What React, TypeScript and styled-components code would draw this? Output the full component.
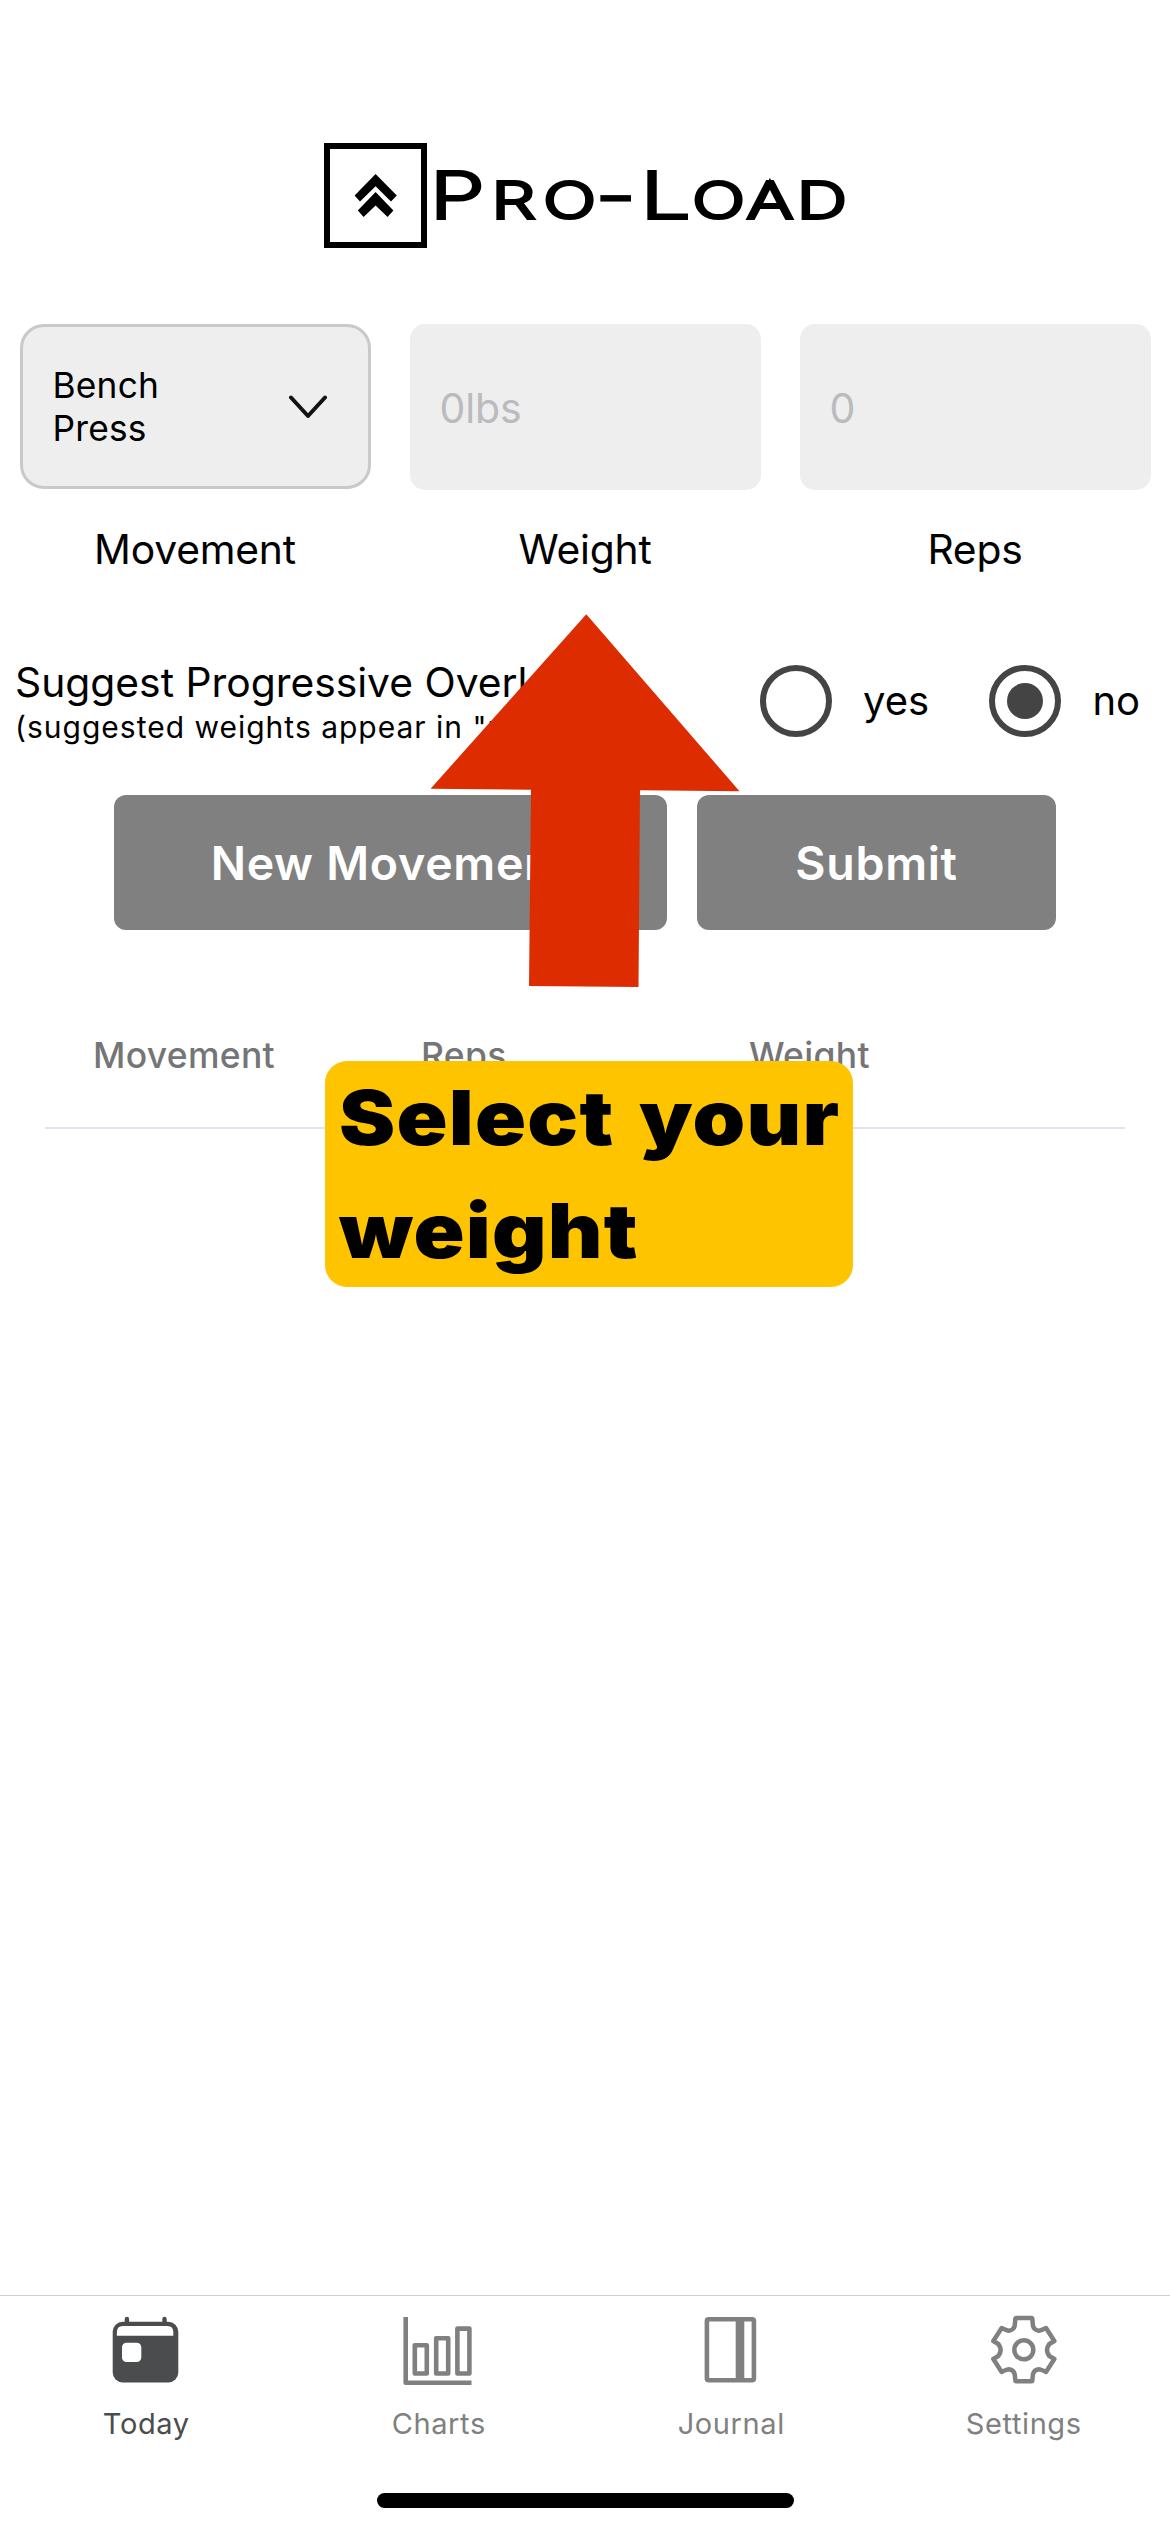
import React from "react";
import styled, { createGlobalStyle } from "styled-components";

const GlobalStyle = createGlobalStyle`
  *, *::before, *::after { box-sizing: border-box; }
  body { margin: 0; background: #fff; }
  button, input { font: inherit; border: 0; margin: 0; }
`;

const Screen = styled.div`
  position: relative;
  width: 1170px;
  height: 2532px;
  display: flex;
  flex-direction: column;
  overflow: hidden;
  background: #fff;
  color: #000;
  font-family: Inter, "Noto Sans", sans-serif;
`;

const Header = styled.header`
  height: 324px;
  padding-top: 143px;
  display: flex;
  justify-content: center;
  align-items: flex-start;
`;

const LogoMark = styled.svg`
  overflow: visible;
`;

const LogoLetters = styled.text`
  font-family: Inter, sans-serif;
  font-weight: 200;
  stroke: #000;
  stroke-width: 3.8px;
  vector-effect: non-scaling-stroke;
`;

const Main = styled.main`
  flex: 1;
  display: flex;
  flex-direction: column;
`;

const Fields = styled.section`
  display: grid;
  grid-template-columns: repeat(3, 1fr);
  height: 250px;
`;

const Field = styled.div`
  display: flex;
  flex-direction: column;
  align-items: center;
`;

const Select = styled.button`
  width: 351px;
  height: 165px;
  margin-bottom: 35px;
  padding: 0 40px 0 30px;
  display: flex;
  align-items: center;
  justify-content: space-between;
  border: 3px solid #c9c9c9;
  border-radius: 24px;
  background: #eee;
  color: #000;
  text-align: left;
`;

const SelectValue = styled.span`
  width: 130px;
  font-size: 35.3px;
  line-height: 43px;
  letter-spacing: 0.2px;
`;

const Input = styled.input`
  width: 351px;
  height: 166px;
  margin-bottom: 34px;
  padding: 1px 30px 0;
  border-radius: 15px;
  background: #eee;
  font-size: 41px;
  letter-spacing: -0.1px;
  &::placeholder { color: #bbbbbe; opacity: 1; }
`;

const Label = styled.label`
  font-size: 40.8px;
  line-height: 50px;
  letter-spacing: -0.2px;
`;

const SuggestRow = styled.section`
  margin-top: 84px;
  height: 86px;
  padding: 0 30px 0 15px;
  display: flex;
  align-items: center;
  justify-content: space-between;
`;

const SuggestText = styled.div`
  display: flex;
  flex-direction: column;
  gap: 5px;
  white-space: nowrap;
`;

const SuggestTitle = styled.span`
  font-size: 40.8px;
  line-height: 46px;
  letter-spacing: 0px;
`;

const SuggestHint = styled.span`
  font-size: 30px;
  line-height: 34px;
  letter-spacing: 1px;
`;

const Radios = styled.div`
  display: flex;
  width: 380px;
  justify-content: space-between;
`;

const Option = styled.label`
  display: flex;
  align-items: center;
  gap: 31px;
  font-size: 40px;
  line-height: 50px;
`;

const Ring = styled.span`
  width: 72px;
  height: 72px;
  display: grid;
  place-items: center;
  border: 6px solid #444;
  border-radius: 50%;
`;

const Dot = styled.span`
  width: 36px;
  height: 36px;
  border-radius: 50%;
  background: #444;
`;

const Actions = styled.section`
  margin-top: 51px;
  display: flex;
  justify-content: center;
  gap: 30px;
`;

const Action = styled.button<{ $width: number }>`
  width: ${(p) => p.$width}px;
  height: 135px;
  padding: 0;
  border-radius: 12px;
  background: #808080;
  color: #fff;
  font-size: 46.5px;
  font-weight: 600;
  letter-spacing: 0.7px;
  white-space: nowrap;
`;

const TableHead = styled.section`
  margin: 103px 45px 0;
  height: 96px;
  padding: 1px 0 0 48px;
  display: grid;
  grid-template-columns: 328px 328px 1fr;
  border-bottom: 2px solid #e3e1ee;
`;

const HeadCell = styled.span`
  font-size: 35.5px;
  line-height: 44px;
  font-weight: 500;
  letter-spacing: 0.3px;
  color: #757578;
`;

const TabBar = styled.nav`
  height: 198px;
  padding-top: 18px;
  display: grid;
  grid-template-columns: repeat(4, 1fr);
  border-top: 1px solid #cfcfd0;
`;

const Tab = styled.a<{ $active?: boolean }>`
  display: flex;
  flex-direction: column;
  align-items: center;
  gap: 20px;
  color: ${(p) => (p.$active ? "#4b4c4e" : "#808080")};
  font-size: 29px;
  line-height: 36px;
  letter-spacing: 0.6px;
  svg { display: block; }
`;

const HomeArea = styled.div`
  height: 39px;
  display: flex;
  justify-content: center;
  align-items: flex-start;
`;

const HomeIndicator = styled.div`
  width: 417px;
  height: 15px;
  border-radius: 8px;
  background: #000;
`;

const Arrow = styled.svg`
  position: absolute;
  left: 430px;
  top: 613px;
`;

const Callout = styled.div`
  position: absolute;
  left: 325px;
  top: 1061px;
  width: 528px;
  height: 226px;
  padding-left: 14px;
  border-radius: 22px;
  background: #ffc400;
`;

const CalloutText = styled.p`
  margin: 0;
  width: max-content;
  font-size: 76px;
  line-height: 113px;
  font-weight: 900;
  letter-spacing: 1.1px;
  word-spacing: 6px;
  white-space: nowrap;
  transform: scaleX(1.11);
  transform-origin: left center;
`;

const Logo = () => (
  <LogoMark width="526" height="105" viewBox="-1 0 526 105" role="img" aria-label="Pro-Load">
    <rect x="4" y="3" width="97" height="99" fill="none" stroke="#000" strokeWidth="6" />
    <path d="M52.6 31 73.8 52.6 68 58.6 52.6 43.2 37 58.6 31.6 52.6Z" />
    <path d="M52.6 49 70.4 67.5 64.6 74 52.6 62.5 40.6 74 34.8 67.5Z" />
    <g transform="scale(1.4 1)">
      <LogoLetters y="75.5" fontSize="63">
        <tspan x="76.5">P</tspan>
        <tspan fontSize="49.5" x="120.5 157.5">RO</tspan>
        <tspan x="195 227">-L</tspan>
        <tspan fontSize="49.5" x="264 303 338.5">OAD</tspan>
      </LogoLetters>
    </g>
  </LogoMark>
);

const ChevronDown = () => (
  <svg width="40" height="24" viewBox="0 0 40 24" fill="none" stroke="#111" strokeWidth="4" strokeLinecap="round" strokeLinejoin="round">
    <path d="M3 2.5 20 21 37 2.5" />
  </svg>
);

const TodayIcon = () => (
  <svg width="72" height="72" viewBox="0 0 72 72" fill="currentColor">
    <rect x="14.7" y="2.7" width="4.4" height="10" rx="2.2" />
    <rect x="52.3" y="2.7" width="4.4" height="10" rx="2.2" />
    <rect x="2.7" y="7.7" width="65.6" height="60.8" rx="10" />
    <path fill="#fff" d="M6.9 21.7V18Q6.9 12 12.9 12H57.3Q63.3 12 63.3 18V21.7Z" />
    <rect fill="#fff" x="12" y="28.7" width="19.3" height="19.3" rx="4.5" />
  </svg>
);

const ChartsIcon = () => (
  <svg width="72" height="72" viewBox="0 0 72 72" fill="none" stroke="currentColor" strokeWidth="4.6" strokeLinejoin="round">
    <path d="M2.7 3V68.7H68.5" />
    <rect x="11.8" y="31.3" width="12" height="28.2" />
    <rect x="33.2" y="24.3" width="12" height="35.2" />
    <rect x="54.4" y="14.6" width="12" height="44.9" />
  </svg>
);

const JournalIcon = () => (
  <svg width="72" height="72" viewBox="0 0 72 72" fill="none" stroke="currentColor">
    <rect x="11.9" y="5.3" width="47" height="61" rx="1.8" strokeWidth="4.6" />
    <path d="M45 5V67" strokeWidth="8.6" />
  </svg>
);

const SettingsIcon = () => (
  <svg width="72" height="72" viewBox="38 42 216 216" fill="none" stroke="currentColor" strokeWidth="13.5" strokeLinejoin="round">
    <path d="M123 54H168Q171 54 171 58L173 78Q176 90 190 92Q196 92 212 84L237 123L222 132Q208 150 222 168L237 177L212 216Q196 208 190 208Q176 210 173 222L171 240Q171 244 168 244H123Q120 244 120 240L118 222Q115 210 101 208Q95 208 79 216L54 177L69 168Q83 150 69 132L54 123L79 84Q95 92 101 92Q115 90 118 78L120 58Q120 54 123 54Z" />
    <circle cx="145.5" cy="149.5" r="28.5" />
  </svg>
);

const tabs = [
  { name: "Today", Icon: TodayIcon },
  { name: "Charts", Icon: ChartsIcon },
  { name: "Journal", Icon: JournalIcon },
  { name: "Settings", Icon: SettingsIcon },
];

export default function App() {
  return (
    <>
      <GlobalStyle />
      <Screen>
        <Header>
          <Logo />
        </Header>
        <Main>
          <Fields>
            <Field>
              <Select>
                <SelectValue>Bench Press</SelectValue>
                <ChevronDown />
              </Select>
              <Label>Movement</Label>
            </Field>
            <Field>
              <Input placeholder="0lbs" />
              <Label>Weight</Label>
            </Field>
            <Field>
              <Input placeholder="0" />
              <Label>Reps</Label>
            </Field>
          </Fields>
          <SuggestRow>
            <SuggestText>
              <SuggestTitle>Suggest Progressive Overload</SuggestTitle>
              <SuggestHint>(suggested weights appear in "reps")</SuggestHint>
            </SuggestText>
            <Radios>
              <Option>
                <Ring />
                yes
              </Option>
              <Option>
                <Ring>
                  <Dot />
                </Ring>
                no
              </Option>
            </Radios>
          </SuggestRow>
          <Actions>
            <Action $width={553}>New Movement</Action>
            <Action $width={359}>Submit</Action>
          </Actions>
          <TableHead>
            <HeadCell>Movement</HeadCell>
            <HeadCell>Reps</HeadCell>
            <HeadCell>Weight</HeadCell>
          </TableHead>
        </Main>
        <TabBar>
          {tabs.map(({ name, Icon }) => (
            <Tab key={name} $active={name === "Today"}>
              <Icon />
              {name}
            </Tab>
          ))}
        </TabBar>
        <HomeArea>
          <HomeIndicator />
        </HomeArea>
        <Arrow width="310" height="375" viewBox="430 613 310 375">
          <path fill="#dd2c00" d="M586.3 614.3 739.5 791.2 640 790.3 638.5 987 529 986 531 789.8 430.6 788.7Z" />
        </Arrow>
        <Callout>
          <CalloutText>
            Select your
            <br />
            weight
          </CalloutText>
        </Callout>
      </Screen>
    </>
  );
}
